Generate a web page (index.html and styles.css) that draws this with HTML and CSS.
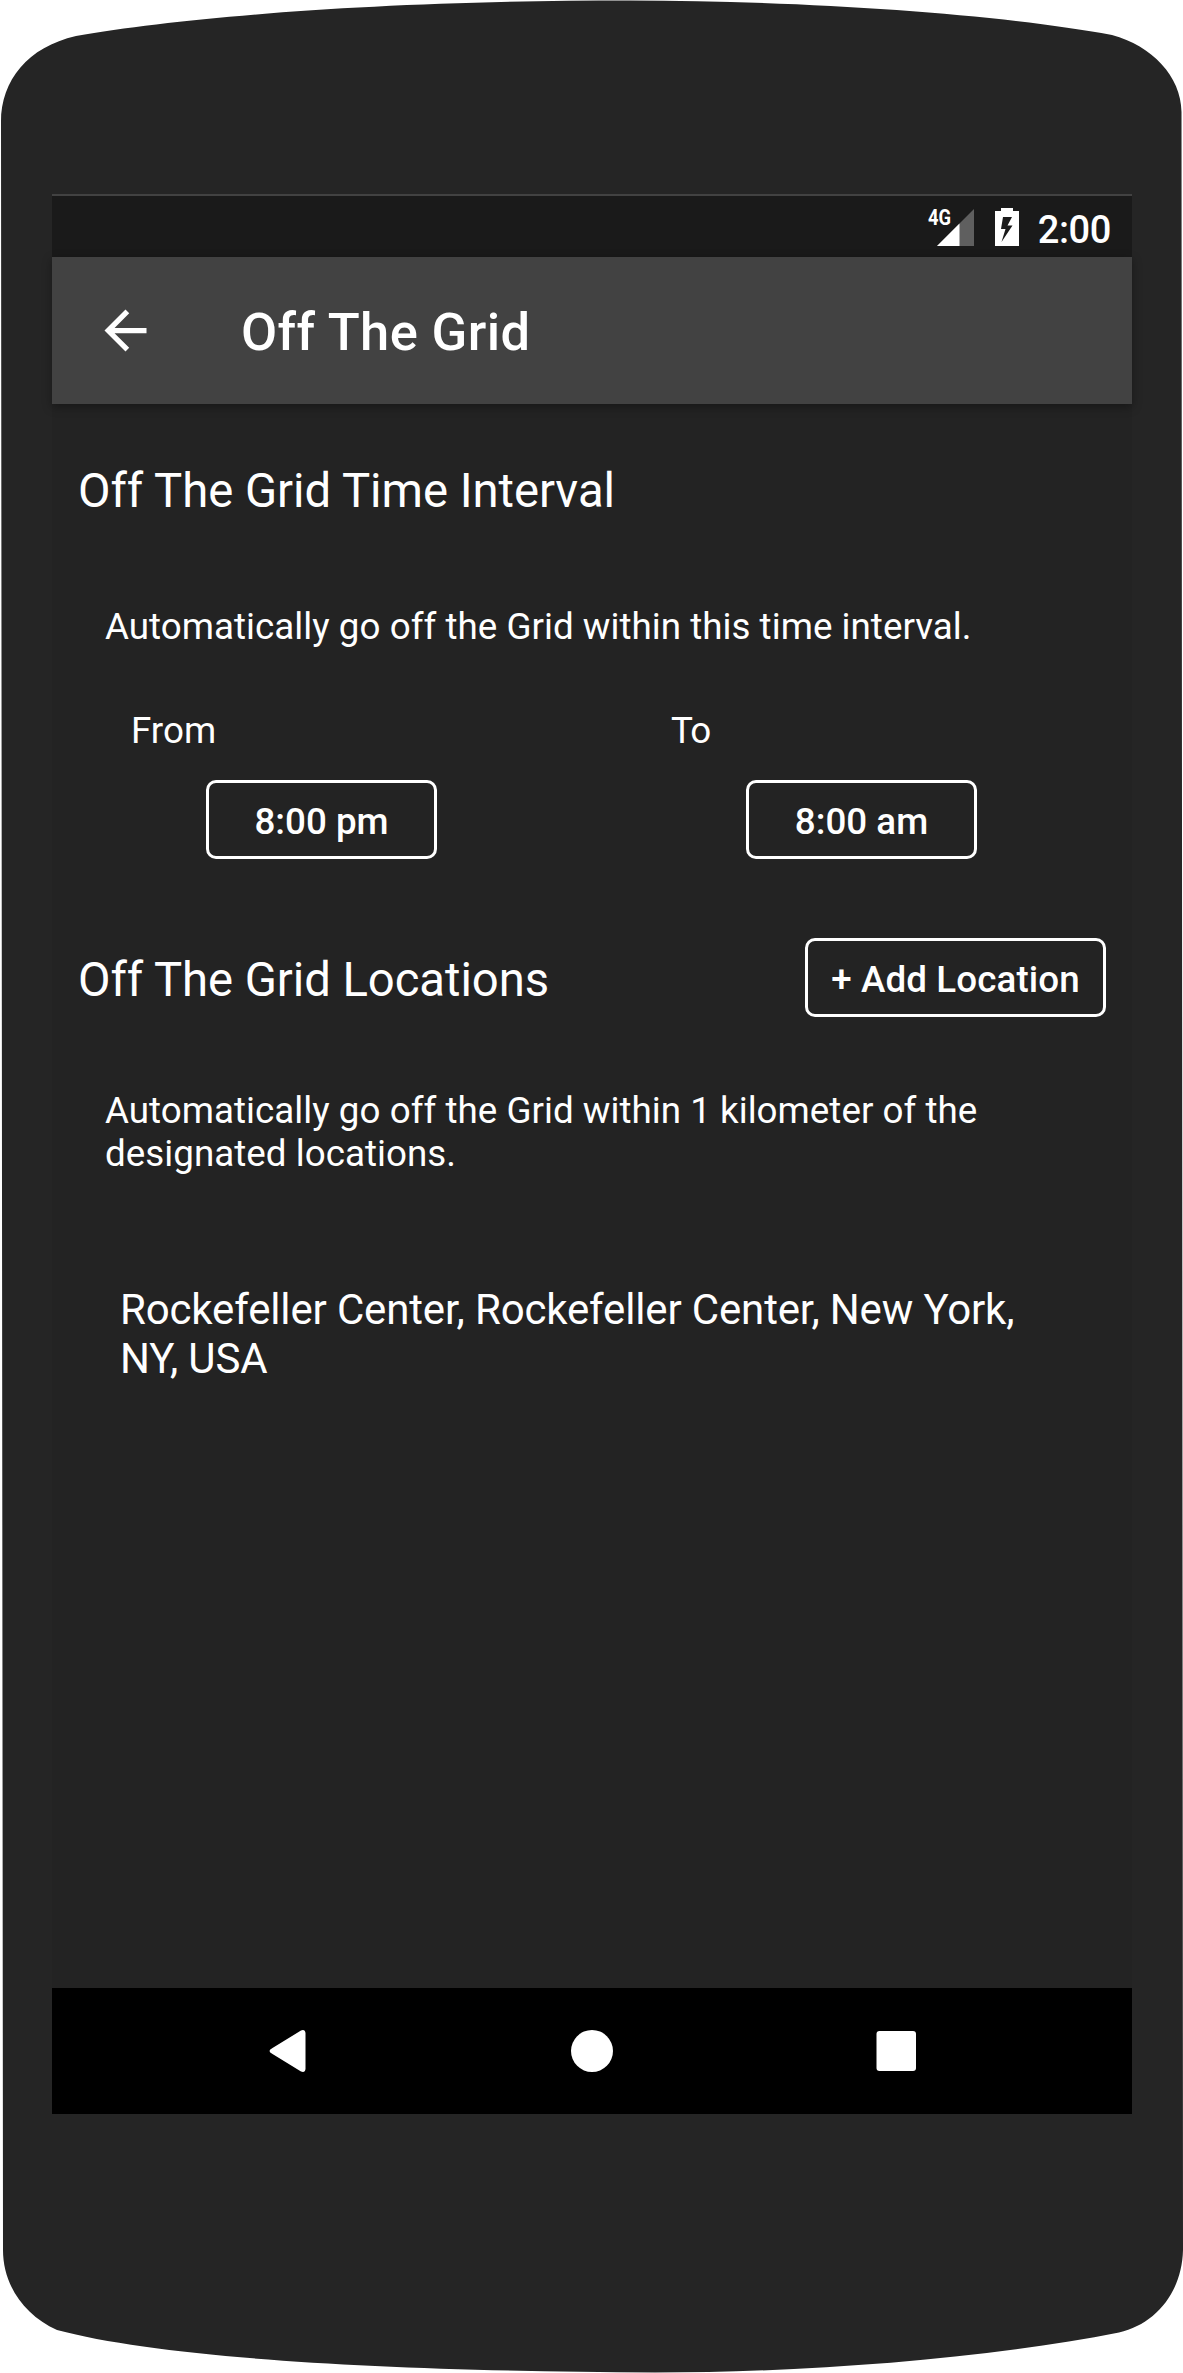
FILE: index.html
```html
<!DOCTYPE html>
<html lang="en">
<head>
<meta charset="utf-8">
<title>Off The Grid</title>
<link rel="stylesheet" href="styles.css">
</head>
<body>
<div class="device">
  <svg class="shell" viewBox="0 0 1183 2373" aria-hidden="true">
    <path d="M1 122C1 80 28 47 76 36C190 16 390 0.5 630 0.5C810 1 1000 14 1112 35C1152 46 1181 76 1181.500 112L1183 2250C1182 2292 1156 2324 1119 2332.500C980 2360 800 2372.500 655 2372.500C400 2371 170 2360 57 2330C24 2315 3 2285 3 2250Z"/>
  </svg>
  <div class="screen">
    <div class="status-bar">
      <svg class="signal" viewBox="0 0 48 40">
        <path class="dim" d="M46 2v37H9z"/>
        <path d="M31.500 16.500v22.500H9z"/>
        <text x="0" y="18" textLength="23" lengthAdjust="spacingAndGlyphs">4G</text>
      </svg>
      <svg class="battery" viewBox="0 0 24 38">
        <path fill-rule="evenodd" d="M6 0h12v3h6v35H0V3h6zM8 9L6 21h4.500L6.500 34L17.500 17.500H12.500L17 9z"/>
      </svg>
      <span class="clock">2:00</span>
    </div>
    <header class="app-bar">
      <svg class="back" viewBox="0 0 24 24"><path d="M20 11H7.830l5.590-5.590L12 4l-8 8 8 8 1.410-1.410L7.830 13H20z"/></svg>
      <h1 class="title">Off The Grid</h1>
    </header>
    <main class="content">
      <h2 class="heading">Off The Grid Time Interval</h2>
      <p class="description interval-description">Automatically go off the Grid within this time interval.</p>
      <div class="times">
        <div class="time">
          <span class="label">From</span>
          <button class="button">8:00 pm</button>
        </div>
        <div class="time">
          <span class="label to">To</span>
          <button class="button">8:00 am</button>
        </div>
      </div>
      <div class="locations-header">
        <h2 class="heading">Off The Grid Locations</h2>
        <button class="button add">+ Add Location</button>
      </div>
      <p class="description">Automatically go off the Grid within 1 kilometer of the designated locations.</p>
      <p class="location">Rockefeller Center, Rockefeller Center, New York, NY, USA</p>
    </main>
    <nav class="nav-bar">
      <svg class="nav-icon" viewBox="0 0 48 48"><path d="M8.500 21L37 3.500Q41 2 41.500 6V42Q41 46 37 44.500L8.500 27Q2.500 24 8.500 21z"/></svg>
      <svg class="nav-icon" viewBox="0 0 48 48"><circle cx="24" cy="24" r="21"/></svg>
      <svg class="nav-icon" viewBox="0 0 48 48"><rect x="4.500" y="4" width="39.500" height="40" rx="3"/></svg>
    </nav>
  </div>
</div>
</body>
</html>
```
FILE: styles.css
```css
* { box-sizing: border-box; }
body { margin: 0; background: #fff; color: #fff; font-family: Roboto, sans-serif; }
h1, h2, p { margin: 0; font-weight: 400; }
svg { display: block; fill: #fff; }

.device { position: relative; width: 1183px; height: 2373px; padding: 194px 51px 259px 52px; overflow: hidden; }
.shell { position: absolute; inset: 0; width: 1183px; height: 2373px; fill: #252525; }
.screen { position: relative; display: flex; flex-direction: column; width: 1080px; height: 1920px; background: #232323; }

.status-bar { display: flex; justify-content: flex-end; align-items: flex-start; height: 63px; padding: 12px 21px 0 0; border-top: 2px solid #424242; background: #1a1a1a; }
.signal { width: 48px; height: 40px; margin: -1px 19px 0 0; overflow: visible; }
.signal .dim { fill: #5f5f5f; }
.signal text { font: 700 22px Roboto, sans-serif; }
.battery { width: 24px; height: 38px; margin-right: 19px; }
.clock { font-size: 38px; font-weight: 500; line-height: 44px; letter-spacing: -.4px; }

.app-bar { display: flex; align-items: center; height: 147px; padding-left: 42px; background: #424242; box-shadow: 0 3px 9px rgba(0, 0, 0, .35); }
.back { width: 63px; height: 63px; }
.title { margin-left: 84px; padding-top: 2px; font-size: 52.500px; font-weight: 500; letter-spacing: .4px; }

.content { flex: 1; padding: 60px 26px 0; }
.heading { font-size: 47.250px; line-height: 55px; letter-spacing: -.03px; }
.description { padding: 0 20px 0 27px; font-size: 36.750px; line-height: 43px; letter-spacing: .03px; }
.interval-description { margin-top: 86px; }
.times { display: grid; grid-template-columns: 540px 1fr; margin-top: 61px; padding-left: 53px; }
.time { display: flex; flex-direction: column; align-items: flex-start; }
.label { font-size: 36.750px; line-height: 43px; }
.label.to { letter-spacing: -1px; }
.button { width: 231px; height: 79px; margin: 28px 0 0 75px; padding: 3px 0 0; border: 3px solid #fff; border-radius: 10px; background: none; color: #fff; font: 500 36.750px Roboto, sans-serif; }
.locations-header { display: flex; justify-content: space-between; align-items: center; height: 79px; margin: 79px 0 72px; }
.locations-header .heading { padding-top: 5px; letter-spacing: -.06px; }
.add { width: 301px; margin: 0; letter-spacing: .1px; }
.location { margin-top: 110px; padding: 0 42px; font-size: 42px; line-height: 49px; letter-spacing: -.15px; }

.nav-bar { display: flex; justify-content: center; align-items: center; gap: 256px; height: 126px; background: #000; }
.nav-icon { width: 48px; height: 48px; }
```
